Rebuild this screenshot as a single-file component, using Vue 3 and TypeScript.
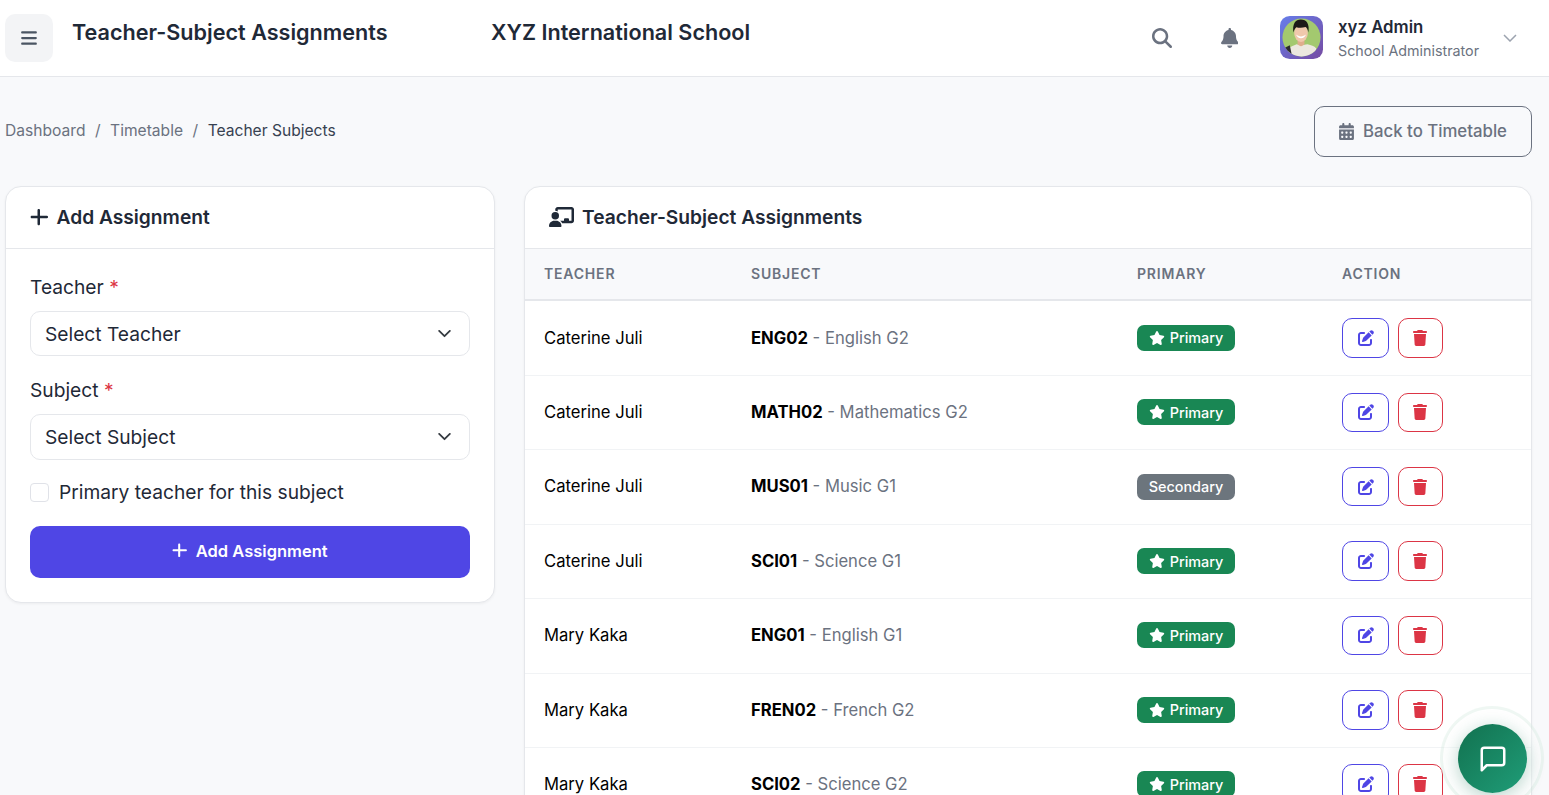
<script setup lang="ts">
interface Row { teacher: string; code: string; name: string; primary: boolean }
const rows: Row[] = [
  { teacher: 'Caterine Juli', code: 'ENG02', name: 'English G2', primary: true },
  { teacher: 'Caterine Juli', code: 'MATH02', name: 'Mathematics G2', primary: true },
  { teacher: 'Caterine Juli', code: 'MUS01', name: 'Music G1', primary: false },
  { teacher: 'Caterine Juli', code: 'SCI01', name: 'Science G1', primary: true },
  { teacher: 'Mary Kaka', code: 'ENG01', name: 'English G1', primary: true },
  { teacher: 'Mary Kaka', code: 'FREN02', name: 'French G2', primary: true },
  { teacher: 'Mary Kaka', code: 'SCI02', name: 'Science G2', primary: true },
]
const plus = 'M256 80c0-17.7-14.3-32-32-32s-32 14.3-32 32V224H48c-17.7 0-32 14.3-32 32s14.3 32 32 32H192V432c0 17.7 14.3 32 32 32s32-14.3 32-32V288H432c17.7 0 32-14.3 32-32s-14.3-32-32-32H256V80z'
</script>

<template>
  <div class="app">
    <header class="topbar">
      <button class="menu" aria-label="Menu">
        <svg viewBox="0 0 448 512" width="16" height="18"><path fill="#4b5563" d="M0 96C0 78.3 14.3 64 32 64H416c17.7 0 32 14.3 32 32s-14.3 32-32 32H32C14.3 128 0 113.7 0 96zM0 256c0-17.7 14.3-32 32-32H416c17.7 0 32 14.3 32 32s-14.3 32-32 32H32c-17.7 0-32-14.3-32-32zM448 416c0 17.7-14.3 32-32 32H32c-17.7 0-32-14.3-32-32s14.3-32 32-32H416c17.7 0 32 14.3 32 32z" /></svg>
      </button>
      <h1 class="page-title">Teacher-Subject Assignments</h1>
      <div class="school">XYZ International School</div>
      <div class="top-right">
        <svg class="search" viewBox="0 0 512 512" width="20" height="20"><path fill="#6b7280" d="M416 208c0 45.9-14.9 88.3-40 122.7L502.6 457.4c12.5 12.5 12.5 32.8 0 45.3s-32.8 12.5-45.3 0L330.7 376c-34.4 25.2-76.8 40-122.7 40C93.100 416 0 322.9 0 208S93.100 0 208 0S416 93.100 416 208zM208 352a144 144 0 1 0 0-288 144 144 0 1 0 0 288z" /></svg>
        <svg class="bell" viewBox="0 0 448 512" width="17.5" height="20"><path fill="#6b7280" d="M224 0c-17.7 0-32 14.3-32 32V51.200C119 66 64 130.600 64 208v18.800c0 47-17.300 92.400-48.500 127.600l-7.400 8.300c-8.400 9.400-10.400 22.900-5.300 34.400S19.400 416 32 416H416c12.600 0 24-7.400 29.200-18.900s3.100-25-5.300-34.400l-7.400-8.300C401.300 319.200 384 273.900 384 226.800V208c0-77.400-55-142-128-156.800V32c0-17.700-14.300-32-32-32zm45.300 493.300c12-12 18.700-28.300 18.700-45.300H224 160c0 17 6.700 33.300 18.700 45.300s28.300 18.700 45.300 18.700s33.300-6.700 45.300-18.700z" /></svg>
        <svg class="avatar" viewBox="0 0 44 44" width="43" height="43">
          <defs>
            <linearGradient id="avg" x1="0" y1="0" x2="1" y2="1"><stop offset="0" stop-color="#667eea" /><stop offset="1" stop-color="#764ba2" /></linearGradient>
            <clipPath id="avc"><circle cx="22" cy="22" r="19.500" /></clipPath>
          </defs>
          <rect width="44" height="44" rx="10" fill="url(#avg)" />
          <g clip-path="url(#avc)">
            <rect width="44" height="44" fill="#a3c96f" />
            <path d="M7 44 9 33c3-2 6-3 8-4l5 1 6-1c4 1 7 2 9 4l2 11z" fill="#ece8df" />
            <path d="M2 44 4 33l6-3 3 14z" fill="#2b2b2d" />
            <path d="M18 24h7v5c-2 2.500-5 2.500-7 0z" fill="#dfae8d" />
            <ellipse cx="21.500" cy="17.500" rx="7" ry="9" fill="#f0c8ac" />
            <path d="M13.800 17c-1.500-9 2-13.500 7.500-13.500 6 0 9.200 4.500 7.700 13.500-.5-3-1.300-5-2.800-5.700-3.500 1-6.500 1-9.500.2-1.500 1-2.300 3.200-2.900 5.500z" fill="#1c1917" />
            <path d="M16.500 19c2.500 2.500 7.500 2.500 10 0-1 5-9 5-10 0z" fill="#fff" />
          </g>
        </svg>
        <div class="user">
          <div class="user-name">xyz Admin</div>
          <div class="user-role">School Administrator</div>
        </div>
        <svg class="user-chev" viewBox="0 0 14 8" width="14" height="8"><path d="M1 1l6 6 6-6" fill="none" stroke="#9ca3af" stroke-width="1.500" /></svg>
      </div>
    </header>

    <main class="content">
      <div class="crumb-row">
        <nav class="crumbs">
          <span class="crumb">Dashboard</span><span class="sep">/</span><span class="crumb">Timetable</span><span class="sep">/</span><span class="crumb-on">Teacher Subjects</span>
        </nav>
        <button class="back">
          <svg viewBox="0 0 448 512" width="15" height="17"><path fill="#6b7280" d="M128 0c17.700 0 32 14.300 32 32V64H288V32c0-17.700 14.300-32 32-32s32 14.300 32 32V64h48c26.500 0 48 21.500 48 48v48H0V112C0 85.500 21.500 64 48 64H96V32c0-17.700 14.300-32 32-32zM0 192H448V464c0 26.500-21.500 48-48 48H48c-26.500 0-48-21.500-48-48V192zm64 80v32c0 8.800 7.200 16 16 16h32c8.800 0 16-7.200 16-16V272c0-8.800-7.200-16-16-16H80c-8.800 0-16 7.200-16 16zm128 0v32c0 8.800 7.200 16 16 16h32c8.800 0 16-7.200 16-16V272c0-8.800-7.200-16-16-16H208c-8.800 0-16 7.200-16 16zm144-16c-8.800 0-16 7.200-16 16v32c0 8.800 7.200 16 16 16h32c8.800 0 16-7.200 16-16V272c0-8.800-7.200-16-16-16H336zM64 400v32c0 8.800 7.200 16 16 16h32c8.800 0 16-7.200 16-16V400c0-8.800-7.200-16-16-16H80c-8.800 0-16 7.200-16 16zm144-16c-8.800 0-16 7.200-16 16v32c0 8.800 7.200 16 16 16h32c8.800 0 16-7.200 16-16V400c0-8.800-7.200-16-16-16H208zm112 16v32c0 8.800 7.200 16 16 16h32c8.800 0 16-7.200 16-16V400c0-8.800-7.200-16-16-16H336c-8.800 0-16 7.200-16 16z" /></svg>
          Back to Timetable
        </button>
      </div>

      <div class="columns">
        <section class="card form-card">
          <div class="card-head">
            <svg viewBox="0 0 448 512" width="17.5" height="20"><path fill="#1f2937" :d="plus" /></svg>
            <h2>Add Assignment</h2>
          </div>
          <div class="form-body">
            <label class="lbl">Teacher <span class="req">*</span></label>
            <div class="select">
              <span>Select Teacher</span>
              <svg viewBox="0 0 14 9" width="13" height="8"><path d="M1 1l6 6 6-6" fill="none" stroke="#343a40" stroke-width="2" stroke-linecap="round" stroke-linejoin="round" /></svg>
            </div>
            <label class="lbl">Subject <span class="req">*</span></label>
            <div class="select">
              <span>Select Subject</span>
              <svg viewBox="0 0 14 9" width="13" height="8"><path d="M1 1l6 6 6-6" fill="none" stroke="#343a40" stroke-width="2" stroke-linecap="round" stroke-linejoin="round" /></svg>
            </div>
            <label class="check"><span class="box"></span>Primary teacher for this subject</label>
            <button class="submit">
              <svg viewBox="0 0 448 512" width="14.4" height="16.5"><path fill="#fff" :d="plus" /></svg>
              Add Assignment
            </button>
          </div>
        </section>

        <section class="card table-card">
          <div class="card-head list-head">
            <svg viewBox="0 0 640 512" width="25" height="20"><path fill="#1f2937" d="M160 64c0-35.300 28.700-64 64-64H576c35.300 0 64 28.700 64 64V352c0 35.300-28.700 64-64 64H336.800c-11.800-25.500-29.900-47.500-52.400-64H384V320c0-17.700 14.300-32 32-32h64c17.700 0 32 14.300 32 32v32h64V64L224 64v49.100C205.200 102.200 183.300 96 160 96V64zm0 64a96 96 0 1 1 0 192 96 96 0 1 1 0-192zM133.300 352h53.300C260.200 352 320 411.800 320 485.300c0 14.700-11.900 26.700-26.700 26.700H26.700C11.900 512 0 500.100 0 485.300C0 411.800 59.800 352 133.300 352z" /></svg>
            <h2>Teacher-Subject Assignments</h2>
          </div>
          <div class="thead">
            <div>TEACHER</div><div>SUBJECT</div><div>PRIMARY</div><div>ACTION</div>
          </div>
          <div v-for="r in rows" :key="r.code" class="row">
            <div class="teacher">{{ r.teacher }}</div>
            <div class="subject"><strong>{{ r.code }}</strong><span class="sub-name"> - {{ r.name }}</span></div>
            <div class="badge-cell">
              <span class="badge" :class="r.primary ? 'on' : 'off'">
                <svg v-if="r.primary" viewBox="0 0 576 512" width="16" height="14"><path fill="#fff" d="M316.900 18C311.600 7 300.400 0 288.100 0s-23.400 7-28.800 18L195 150.300 51.400 171.500c-12 1.800-22 10.200-25.700 21.700s-.7 24.200 7.900 32.700L137.800 329 113.200 474.700c-2 12 3 24.200 12.900 31.300s23 8 33.800 2.300l128.300-68.500 128.300 68.500c10.800 5.700 23.900 4.900 33.800-2.300s14.900-19.300 12.900-31.300L438.500 329 542.700 225.900c8.600-8.500 11.700-21.200 7.900-32.700s-13.700-19.900-25.700-21.700L381.200 150.300 316.900 18z" /></svg>
                {{ r.primary ? 'Primary' : 'Secondary' }}
              </span>
            </div>
            <div class="actions">
              <button class="act edit" aria-label="Edit">
                <svg viewBox="0 0 512 512" width="16" height="16"><path fill="#4f46e5" d="M471.600 21.700c-21.900-21.900-57.300-21.900-79.200 0L362.300 51.700l97.900 97.900 30.100-30.100c21.900-21.900 21.900-57.300 0-79.200L471.600 21.700zm-299.200 220c-6.100 6.100-10.800 13.600-13.500 21.900l-29.600 88.800c-2.900 8.600-.6 18.100 5.800 24.600s15.900 8.700 24.600 5.800l88.800-29.600c8.200-2.700 15.700-7.400 21.900-13.500L437.700 172.300 339.700 74.300 172.400 241.700zM96 64C43 64 0 107 0 160V416c0 53 43 96 96 96H352c53 0 96-43 96-96V320c0-17.700-14.300-32-32-32s-32 14.300-32 32v96c0 17.700-14.300 32-32 32H96c-17.700 0-32-14.300-32-32V160c0-17.700 14.300-32 32-32h96c17.700 0 32-14.300 32-32s-14.300-32-32-32H96z" /></svg>
              </button>
              <button class="act del" aria-label="Delete">
                <svg viewBox="0 0 448 512" width="14" height="16"><path fill="#dc3545" d="M135.200 17.700L128 32H32C14.300 32 0 46.300 0 64S14.300 96 32 96H416c17.700 0 32-14.300 32-32s-14.300-32-32-32H320l-7.200-14.300C307.400 6.800 296.300 0 284.200 0H163.800c-12.100 0-23.200 6.800-28.600 17.700zM416 128H32L53.200 467c1.600 25.300 22.600 45 47.900 45H346.900c25.300 0 46.300-19.700 47.900-45L416 128z" /></svg>
              </button>
            </div>
          </div>
        </section>
      </div>
    </main>

    <div class="fab-ring"></div>
    <button class="fab" aria-label="Chat">
      <svg viewBox="0 0 24 24" width="30" height="30"><path d="M21 15a2 2 0 0 1-2 2H7l-4 4V5a2 2 0 0 1 2-2h14a2 2 0 0 1 2 2z" fill="none" stroke="#fff" stroke-width="2" stroke-linecap="round" stroke-linejoin="round" /></svg>
    </button>
  </div>
</template>

<style>
html, body { margin: 0; height: 100%; overflow: hidden; background: #f8f9fb; }
</style>

<style scoped>
.app { font-family: Inter, "Noto Sans", sans-serif; color: #1f2937; height: 795px; overflow: hidden; position: relative; background: #f8f9fb; }
button { font-family: inherit; cursor: pointer; }

.topbar { height: 76px; background: #fff; border-bottom: 1px solid #e5e7eb; display: flex; align-items: flex-start; padding: 0 32px 0 5px; }
.menu { width: 48px; height: 48px; margin-top: 14px; border: 0; border-radius: 10px; background: #f3f4f6; display: flex; align-items: center; justify-content: center; padding: 0; flex: none; }
.page-title { margin: 17px 0 0 19px; width: 419px; font-size: 21.600px; line-height: 30px; font-weight: 600; color: #1f2937; flex: none; }
.school { margin-top: 17px; font-size: 21.600px; line-height: 30px; font-weight: 600; color: #1f2937; }
.top-right { margin-left: auto; height: 76px; display: flex; align-items: center; }
.search { margin-right: 49px; }
.bell { margin-right: 42px; }
.avatar { flex: none; margin-right: 15px; margin-bottom: 1px; }
.user { width: 165px; }
.user-name { font-size: 16.800px; line-height: 22px; font-weight: 600; color: #1f2937; }
.user-role { font-size: 14.300px; line-height: 20px; margin-top: 3px; color: #6b7280; }
.user-chev { flex: none; }

.content { padding: 29px 17px 0 5px; }
.crumb-row { display: flex; justify-content: space-between; align-items: center; height: 51px; }
.crumbs { font-size: 15.600px; display: flex; align-items: center; padding-bottom: 3px; }
.crumb { color: #6b7280; }
.crumb-on { color: #374151; }
.sep { color: #6b7280; margin: 0 9.500px; }
.back { width: 218px; height: 51px; border: 1px solid #6b7280; border-radius: 10px; background: transparent; color: #6b7280; font-size: 16.800px; font-weight: 500; display: flex; align-items: center; justify-content: center; gap: 9px; padding: 0 0 1px; }

.columns { display: grid; grid-template-columns: 490px 1008px; column-gap: 29px; margin-top: 29px; align-items: start; }
.card { background: #fff; border: 1px solid #e5e7eb; border-radius: 16px; box-shadow: 0 1px 3px rgba(0, 0, 0, 0.05); }
.table-card { min-height: 700px; overflow: hidden; }
.card-head { height: 62px; box-sizing: border-box; border-bottom: 1px solid #e5e7eb; padding: 0 24px 2px; display: flex; align-items: center; gap: 9px; }
.card-head h2 { margin: 0; font-size: 19.200px; font-weight: 600; color: #1f2937; }
.list-head { gap: 8px; }
.form-body { padding: 24px; display: flex; flex-direction: column; }
.lbl { font-size: 19.200px; line-height: 28.800px; margin-bottom: 9px; color: #1f2937; font-weight: 400; }
.req { color: #dc3545; }
.select { height: 45.600px; box-sizing: border-box; border: 1px solid #e5e7eb; border-radius: 10px; padding: 0 18px 0 14px; display: flex; align-items: center; justify-content: space-between; font-size: 19.200px; margin-bottom: 20px; color: #1f2937; background: #fff; }
.check { display: flex; align-items: center; gap: 10px; font-size: 19.200px; line-height: 28.800px; color: #1f2937; margin: -2px 0 19px; }
.box { width: 17px; height: 17px; border: 1px solid #e0e2e8; border-radius: 4px; background: #fff; flex: none; }
.submit { height: 52px; border: 0; border-radius: 10px; background: #4f46e5; color: #fff; font-size: 16.500px; font-weight: 600; display: flex; align-items: center; justify-content: center; gap: 9px; padding: 0 0 2px; }

.thead, .row { display: grid; grid-template-columns: 207px 386px 205px 1fr; }
.thead { height: 52px; margin-bottom: 0.600px; background: #f8f9fb; border-bottom: 2px solid #e5e7eb; box-sizing: border-box; align-items: center; font-size: 14px; font-weight: 600; letter-spacing: 0.800px; color: #6b7280; padding-bottom: 1.500px; }
.thead > div, .row > div { padding-left: 19px; }
.row { height: 74.400px; box-sizing: border-box; border-bottom: 1px solid #f1f3f5; align-items: center; font-size: 16.640px; color: #000; }
.row > .teacher, .row > .subject { padding-bottom: 1.400px; }
.row > .badge-cell, .row > .actions { padding-bottom: 0.800px; }
.subject strong { font-weight: 700; color: #000; }
.sub-name { color: #6b7280; }
.badge { display: inline-flex; align-items: center; justify-content: center; gap: 5px; width: 98px; height: 26px; border-radius: 7px; color: #fff; font-size: 14.400px; font-weight: 500; box-sizing: border-box; vertical-align: middle; }
.badge.on { background: #198754; }
.badge.off { background: #6c757d; }
.actions { display: flex; gap: 9.300px; }
.act { height: 39.500px; border-radius: 10px; background: transparent; display: flex; align-items: center; justify-content: center; }
.edit { width: 46.700px; border: 1px solid #4f46e5; padding: 0 0 0 1px; }
.del { width: 44.700px; border: 1px solid #dc3545; padding: 0 0.500px 0 0; }

.fab-ring { position: absolute; left: 1440px; top: 706px; width: 104px; height: 104px; box-sizing: border-box; border-radius: 50%; border: 3px solid rgba(25, 135, 84, 0.07); background: rgba(255, 255, 255, 0.4); }
.fab { position: absolute; left: 1458px; top: 724px; width: 69px; height: 69px; border: 0; border-radius: 50%; padding: 0; background: linear-gradient(135deg, #12714f, #1f9d78); box-shadow: 0 4px 18px rgba(18, 113, 79, 0.3); display: flex; align-items: center; justify-content: center; }
</style>
